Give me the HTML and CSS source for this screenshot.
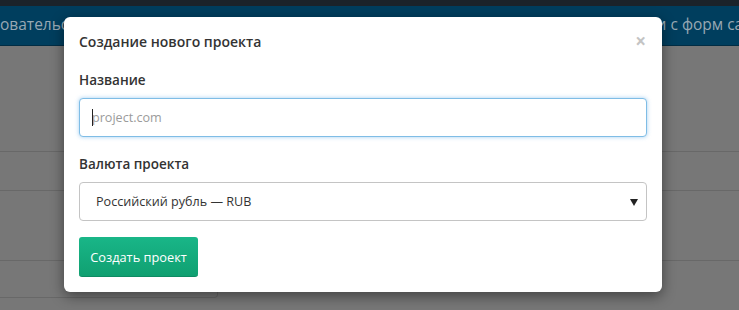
FILE: index.html
```html
<!DOCTYPE html>
<html lang="ru">
<head>
    <meta charset="UTF-8">
    <meta name="viewport" content="width=device-width, initial-scale=1.0">
    <title>Создание нового проекта</title>
    <link rel="stylesheet" href="styles.css">
</head>
<body>
    <div class="topline"></div>
    <nav class="navbar">
        <span class="nav-left">овательских заявок</span>
        <span class="nav-right">и с форм сайта</span>
    </nav>
    <div class="page">
        <div class="row row-top"></div>
        <div class="row row-mid"></div>
        <div class="row row-big"></div>
        <div class="box"></div>
    </div>

    <div class="modal">
        <div class="modal-header">
            <h4 class="modal-title">Создание нового проекта</h4>
            <span class="close">&times;</span>
        </div>
        <form class="modal-body">
            <div class="form-group">
                <label for="domain">Название</label>
                <div class="input-wrap">
                    <input type="text" id="domain" class="form-control focused" placeholder="project.com">
                    <span class="caret"></span>
                </div>
            </div>
            <div class="form-group">
                <label for="currency">Валюта проекта</label>
                <div class="select-wrap">
                    <select id="currency" class="form-control">
                        <option>Российский рубль — RUB</option>
                    </select>
                </div>
            </div>
            <button type="submit" class="btn-green">Создать проект</button>
        </form>
    </div>
</body>
</html>
```

FILE: styles.css
```css
body {
    font-family: "Open Sans", "Noto Sans", sans-serif;
    font-size: 13px;
    background-color: #777777;
    margin: 0;
    padding: 0;
    height: 310px;
    overflow: hidden;
    position: relative;
}
.topline {
    height: 6px;
    background-color: #1b232a;
}
.navbar {
    height: 39px;
    background-color: #003e5e;
    border-bottom: 1px solid #022d44;
    display: flex;
    justify-content: space-between;
    align-items: center;
    color: #98a8b3;
    font-size: 15.5px;
    white-space: nowrap;
    overflow: hidden;
}
.nav-left {
    margin-top: -3px;
}
.nav-right {
    margin-top: -3px;
    margin-right: -30px;
}
.page {
    display: flex;
    flex-direction: column;
}
.row {
    border-bottom: 1px solid #686868;
}
.row-top {
    height: 105px;
}
.row-mid {
    height: 38px;
}
.row-big {
    height: 69px;
}
.box {
    width: 217px;
    height: 36px;
    border-right: 1px solid #686868;
    border-bottom: 1px solid #686868;
    border-bottom-right-radius: 4px;
}
.modal {
    position: absolute;
    top: 17px;
    left: 64px;
    width: 598px;
    height: 275px;
    box-sizing: border-box;
    background-color: #ffffff;
    border-radius: 6px;
    box-shadow: 0 4px 14px rgba(0, 0, 0, 0.45);
    padding: 15px;
    color: #333333;
}
.modal-header {
    display: flex;
    justify-content: space-between;
    align-items: center;
    height: 20px;
    margin-bottom: 18px;
}
.modal-title {
    margin: 0;
    font-size: 14px;
    font-weight: 600;
    line-height: 20px;
}
.close {
    color: #c4c4c4;
    font-size: 19px;
    font-weight: 700;
    margin-right: 1px;
    margin-top: -2px;
}
.form-group {
    margin-bottom: 17px;
}
.form-group:nth-child(2) {
    margin-bottom: 16px;
}
label {
    display: block;
    font-size: 13.5px;
    font-weight: 600;
    line-height: 20px;
    margin-bottom: 8px;
}
.input-wrap,
.select-wrap {
    position: relative;
}
.form-control {
    display: block;
    width: 100%;
    height: 39px;
    box-sizing: border-box;
    border: 1px solid #c4c4c4;
    border-radius: 4px;
    font-family: "Open Sans", "Noto Sans", sans-serif;
    font-size: 12.6px;
    color: #333333;
    background-color: #ffffff;
    padding: 0 12px;
    outline: none;
}
.focused {
    border-color: #7fbde6;
    box-shadow: 0 0 4px rgba(102, 175, 233, 0.6);
}
.form-control::placeholder {
    color: #9b9b9b;
}
.caret {
    position: absolute;
    left: 13px;
    top: 11px;
    width: 1px;
    height: 17px;
    background-color: #222222;
}
select.form-control {
    appearance: none;
    -webkit-appearance: none;
    padding-left: 16px;
}
.select-wrap::after {
    content: "";
    position: absolute;
    right: 9px;
    top: 17px;
    border-left: 4px solid transparent;
    border-right: 4px solid transparent;
    border-top: 7px solid #222222;
}
.btn-green {
    height: 40px;
    width: 119px;
    box-sizing: border-box;
    background: linear-gradient(#19b688, #10a071);
    color: white;
    border: none;
    border-bottom: 1px solid #0e8b63;
    border-radius: 3px;
    font-family: "Open Sans", "Noto Sans", sans-serif;
    font-size: 12.8px;
    font-weight: 500;
    padding: 0;
    cursor: pointer;
}
.btn-green:hover {
    background: #10a071;
}
```
